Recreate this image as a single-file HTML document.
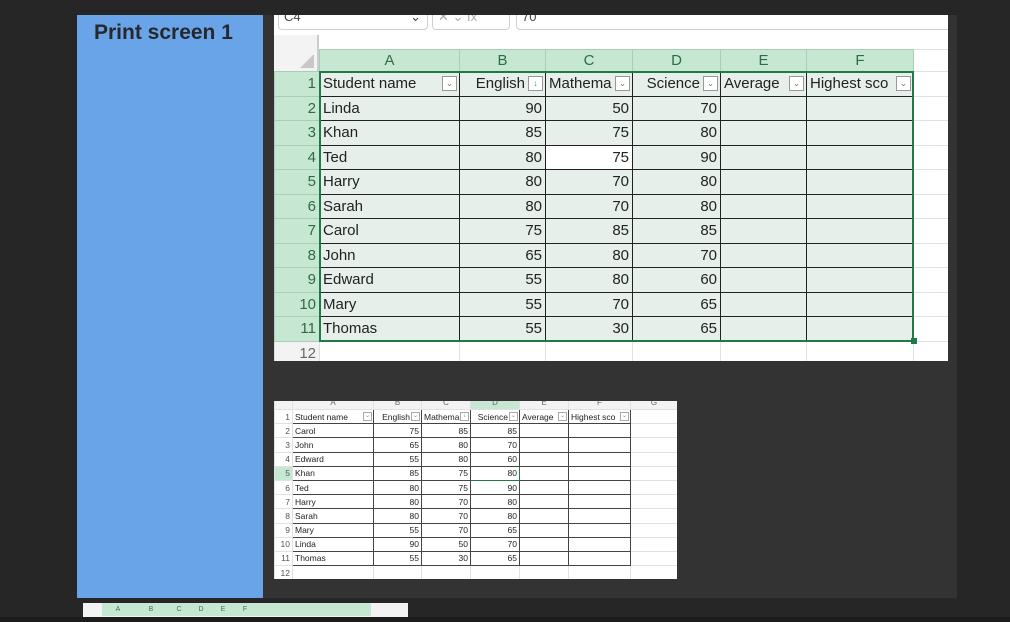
<!DOCTYPE html>
<html><head><meta charset="utf-8"><style>
*{margin:0;padding:0;box-sizing:border-box}
body{width:1010px;height:622px;background:#262626;position:relative;overflow:hidden;font-family:"Liberation Sans",sans-serif}
.blue{position:absolute;left:77px;top:15px;width:186px;height:583px;background:#6aa4e8}
.blue h1{position:absolute;left:17px;top:6px;font-size:21px;font-weight:bold;color:#26282c;white-space:nowrap}
.dark{position:absolute;left:263px;top:15px;width:694px;height:583px;background:#333}
.x1{position:absolute;left:274px;top:15px;width:674px;height:346px;background:#fff;overflow:hidden}
.fb{position:absolute;top:0;height:15px;border:1px solid #d0d0d0;border-top:none;border-radius:0 0 4px 4px;background:#fff;font-size:13px;color:#444;line-height:4px;padding-left:5px}
table{border-collapse:collapse;table-layout:fixed;position:absolute}
td{overflow:hidden;white-space:nowrap;border:1px solid #e1e1e1;padding:0 3px;position:relative}
.t1{left:0;top:34px;font-size:15px;color:#222}
.t1 td{height:24.5px}
.t1 tr.h td{height:22px;text-align:center;background:#c6e7d2;color:#2f6b45;border-color:#aacdb6;font-size:15px}
.t1 tr.h td.g{background:#fff;border-color:#e1e1e1}
.t1 td.rh{text-align:right;color:#2f6b45;background:#c6e7d2;border-color:#aacdb6;padding-right:3px}
.t1 td.d{background:#e6efe9;border:1px solid #222}
.t1 td.n{text-align:right}
.t1 td.w{background:#fff}
.pr{padding-right:20px!important}
.dd{position:absolute;right:2px;top:4px;width:15px;height:15px;border:1px solid #999;background:#fff;font-size:9px;line-height:13px;text-align:center;color:#777}
.x2{position:absolute;left:274px;top:401px;width:403px;height:178px;background:#fff;overflow:hidden}
.t2{left:0;top:-6px;font-size:8.5px;color:#222}
.t2 td{height:14.2px;padding:0 2px}
.t2 tr.h td{height:14px;text-align:center;color:#666;background:#f3f3f3;font-size:8px}
.t2 td.rh{text-align:right;color:#555;background:#fff}
.t2 td.d{border:1px solid #444}
.t2 td.n{text-align:right}
.pr2{padding-right:11px!important}
.dd2{position:absolute;right:1px;top:2px;width:9px;height:9px;border:1px solid #aaa;background:#fff;font-size:6px;line-height:7px;text-align:center;color:#888}
.x3{position:absolute;left:83px;top:603px;width:325px;height:19px;background:#f3f3f3;overflow:hidden}
.bot{position:absolute;left:0;top:617px;width:1010px;height:5px;background:#1c1c1c}
</style></head><body>
<div class="blue"><h1>Print screen 1</h1></div>
<div class="dark"></div>
<div class="x1">
 <div class="fb" style="left:4px;width:150px">C4<span style="float:right;padding-right:6px">⌄</span></div>
 <div class="fb" style="left:158px;width:78px;color:#aaa">✕ ⌄ fx</div>
 <div class="fb" style="left:242px;width:440px">70</div>
 <div style="position:absolute;left:0;top:20px;width:45px;height:36px;background:#f3f3f3;border-right:2px solid #ccc"><div style="position:absolute;right:3px;bottom:3px;width:0;height:0;border-left:14px solid transparent;border-bottom:14px solid #c8c8c8"></div></div>
 <table class="t1" style="width:709px">
  <colgroup><col style="width:45px"><col style="width:140px"><col style="width:86px"><col style="width:87px"><col style="width:88px"><col style="width:86px"><col style="width:107px"><col style="width:70px"></colgroup>
  <tr class="h"><td style="background:transparent;border:none"></td><td>A</td><td>B</td><td>C</td><td>D</td><td>E</td><td>F</td><td class="g"></td></tr>
  <tr><td class="rh">1</td><td class="d pr">Student name<span class="dd">⌄</span></td><td class="d n pr">English<span class="dd" style="color:#2a7">↓</span></td><td class="d pr">Mathema<span class="dd">⌄</span></td><td class="d n pr">Science<span class="dd">⌄</span></td><td class="d pr">Average<span class="dd">⌄</span></td><td class="d pr">Highest sco<span class="dd">⌄</span></td><td></td></tr>
  <tr><td class="rh">2</td><td class="d">Linda</td><td class="d n">90</td><td class="d n">50</td><td class="d n">70</td><td class="d"></td><td class="d"></td><td></td></tr>
  <tr><td class="rh">3</td><td class="d">Khan</td><td class="d n">85</td><td class="d n">75</td><td class="d n">80</td><td class="d"></td><td class="d"></td><td></td></tr>
  <tr><td class="rh">4</td><td class="d">Ted</td><td class="d n">80</td><td class="d n w">75</td><td class="d n">90</td><td class="d"></td><td class="d"></td><td></td></tr>
  <tr><td class="rh">5</td><td class="d">Harry</td><td class="d n">80</td><td class="d n">70</td><td class="d n">80</td><td class="d"></td><td class="d"></td><td></td></tr>
  <tr><td class="rh">6</td><td class="d">Sarah</td><td class="d n">80</td><td class="d n">70</td><td class="d n">80</td><td class="d"></td><td class="d"></td><td></td></tr>
  <tr><td class="rh">7</td><td class="d">Carol</td><td class="d n">75</td><td class="d n">85</td><td class="d n">85</td><td class="d"></td><td class="d"></td><td></td></tr>
  <tr><td class="rh">8</td><td class="d">John</td><td class="d n">65</td><td class="d n">80</td><td class="d n">70</td><td class="d"></td><td class="d"></td><td></td></tr>
  <tr><td class="rh">9</td><td class="d">Edward</td><td class="d n">55</td><td class="d n">80</td><td class="d n">60</td><td class="d"></td><td class="d"></td><td></td></tr>
  <tr><td class="rh">10</td><td class="d">Mary</td><td class="d n">55</td><td class="d n">70</td><td class="d n">65</td><td class="d"></td><td class="d"></td><td></td></tr>
  <tr><td class="rh">11</td><td class="d">Thomas</td><td class="d n">55</td><td class="d n">30</td><td class="d n">65</td><td class="d"></td><td class="d"></td><td></td></tr>
  <tr><td class="rh" style="background:#f3f3f3;color:#666;border-color:#ddd">12</td><td></td><td></td><td></td><td></td><td></td><td></td><td></td></tr>
 </table>
 <div style="position:absolute;left:45px;top:56px;width:595px;height:271px;border:2px solid #1f7a47"></div>
 <div style="position:absolute;left:637px;top:323px;width:6px;height:6px;background:#1f7a47"></div>
</div>
<div class="x2">
 <table class="t2" style="width:403px">
  <colgroup><col style="width:18px"><col style="width:81px"><col style="width:48px"><col style="width:49px"><col style="width:49px"><col style="width:49px"><col style="width:62px"><col style="width:47px"></colgroup>
  <tr class="h"><td></td><td>A</td><td>B</td><td>C</td><td style="background:#c6e7d2">D</td><td>E</td><td>F</td><td>G</td></tr>
  <tr><td class="rh">1</td><td class="d pr2">Student name<span class="dd2">⌄</span></td><td class="d n pr2">English<span class="dd2">⌄</span></td><td class="d pr2">Mathema<span class="dd2" style="color:#2a7">↓</span></td><td class="d n pr2">Science<span class="dd2">⌄</span></td><td class="d pr2">Average<span class="dd2">⌄</span></td><td class="d pr2">Highest sco<span class="dd2">⌄</span></td><td></td></tr>
  <tr><td class="rh">2</td><td class="d">Carol</td><td class="d n">75</td><td class="d n">85</td><td class="d n">85</td><td class="d"></td><td class="d"></td><td></td></tr>
  <tr><td class="rh">3</td><td class="d">John</td><td class="d n">65</td><td class="d n">80</td><td class="d n">70</td><td class="d"></td><td class="d"></td><td></td></tr>
  <tr><td class="rh">4</td><td class="d">Edward</td><td class="d n">55</td><td class="d n">80</td><td class="d n">60</td><td class="d"></td><td class="d"></td><td></td></tr>
  <tr><td class="rh" style="background:#c6e7d2">5</td><td class="d">Khan</td><td class="d n">85</td><td class="d n">75</td><td class="d n" style="border:1px solid #1f7a47">80</td><td class="d"></td><td class="d"></td><td></td></tr>
  <tr><td class="rh">6</td><td class="d">Ted</td><td class="d n">80</td><td class="d n">75</td><td class="d n">90</td><td class="d"></td><td class="d"></td><td></td></tr>
  <tr><td class="rh">7</td><td class="d">Harry</td><td class="d n">80</td><td class="d n">70</td><td class="d n">80</td><td class="d"></td><td class="d"></td><td></td></tr>
  <tr><td class="rh">8</td><td class="d">Sarah</td><td class="d n">80</td><td class="d n">70</td><td class="d n">80</td><td class="d"></td><td class="d"></td><td></td></tr>
  <tr><td class="rh">9</td><td class="d">Mary</td><td class="d n">55</td><td class="d n">70</td><td class="d n">65</td><td class="d"></td><td class="d"></td><td></td></tr>
  <tr><td class="rh">10</td><td class="d">Linda</td><td class="d n">90</td><td class="d n">50</td><td class="d n">70</td><td class="d"></td><td class="d"></td><td></td></tr>
  <tr><td class="rh">11</td><td class="d">Thomas</td><td class="d n">55</td><td class="d n">30</td><td class="d n">65</td><td class="d"></td><td class="d"></td><td></td></tr>
  <tr><td class="rh">12</td><td></td><td></td><td></td><td></td><td></td><td></td><td></td></tr>
 </table>
</div>
<div class="x3">
 <div style="position:absolute;left:19px;top:0;width:269px;height:13px;background:#c6e7d2;font-size:7px;color:#3a7a52;display:flex;line-height:13px">
  <span style="width:32px;text-align:center">A</span><span style="width:34px;text-align:center">B</span><span style="width:22px;text-align:center">C</span><span style="width:22px;text-align:center">D</span><span style="width:22px;text-align:center">E</span><span style="width:22px;text-align:center">F</span>
 </div>
</div>
<div class="bot"></div>
</body></html>
